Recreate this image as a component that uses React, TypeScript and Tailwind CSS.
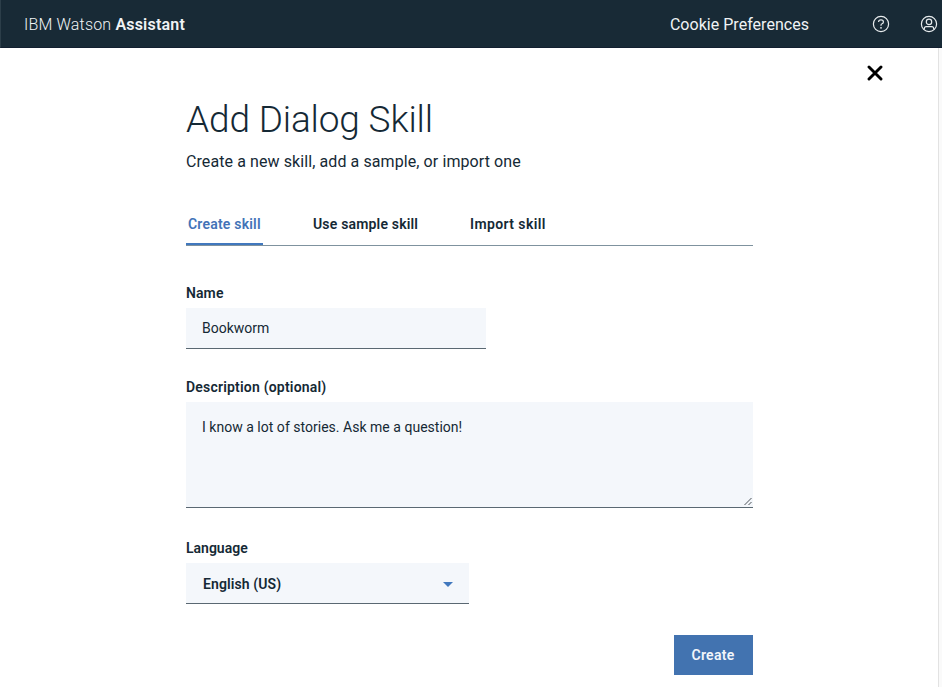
import React from "react";

function HelpIcon() {
  return (
    <svg width="18" height="18" viewBox="0 0 18 18" fill="none" stroke="#e8ecee" strokeWidth="1.2">
      <circle cx="9" cy="9" r="7.6" />
      <path d="M6.6 7.1V6.8C6.6 5.6 7.5 4.9 9 4.9s2.4.8 2.4 2c0 1-.6 1.5-1.4 1.9-.7.3-1 .6-1 1.4v.5" />
      <circle cx="9" cy="12.8" r=".9" fill="#e8ecee" stroke="none" />
    </svg>
  );
}

function UserIcon() {
  return (
    <svg width="18" height="18" viewBox="0 0 18 18" fill="none" stroke="#e8ecee" strokeWidth="1.2">
      <circle cx="9" cy="9" r="7.6" />
      <circle cx="9" cy="6.9" r="2.7" />
      <path d="M4.3 14.6v-.9c0-1.2.9-2 2-2h5.4c1.1 0 2 .8 2 2v.9" />
    </svg>
  );
}

const label = "block h-5 w-fit whitespace-nowrap text-[14px] leading-5 font-semibold";

export default function App() {
  return (
    <div className="flex h-[687px] w-[942px] flex-col overflow-hidden bg-white font-['Roboto','Liberation_Sans',sans-serif] text-[#152935]">
      <header className="flex h-12 shrink-0 items-center border-b border-l border-b-[#121f30] border-l-[#2c3e49] bg-[#182a36] pl-[23px] text-[16px] text-[#f0f3f5]">
        <div className="pt-[2px] whitespace-nowrap">
          <span className="font-light tracking-[0.18px]">IBM Watson </span>
          <span className="font-semibold tracking-[0.2px]">Assistant</span>
        </div>
        <div className="mr-[63px] ml-auto pt-[2px] whitespace-nowrap tracking-[0.03px]">Cookie Preferences</div>
        <div className="flex gap-[30px] pr-1">
          <HelpIcon />
          <UserIcon />
        </div>
      </header>
      <div className="flex flex-1">
        <main className="relative w-[939px] border-r border-[#e2e2e2] pl-[186px]">
          <button aria-label="Close" className="absolute top-[17px] left-[867px]">
            <svg width="16" height="16" viewBox="0 0 16 16" stroke="#000" strokeWidth="2.9" strokeLinecap="round">
              <path d="M2 2 14 14M14 2 2 14" />
            </svg>
          </button>
          <div className="flex w-[567px] flex-col">
            <h1 className="mt-[48px] h-12 w-fit whitespace-nowrap text-[37px] leading-[48px] font-light tracking-[-0.15px]">Add Dialog Skill</h1>
            <p className="mt-[6px] h-6 w-fit whitespace-nowrap text-[16px] leading-6 tracking-[0.09px]">Create a new skill, add a sample, or import one</p>
            <nav className="mt-[29px] flex h-[43px] border-b border-[#7f929e] text-[14px] leading-5 font-semibold">
              <div className="h-[42px] w-[77px] border-b-2 border-[#4178be] pt-[11px] pl-[2px] tracking-[0.2px] whitespace-nowrap text-[#4373b7]"><span>Create skill</span></div>
              <div className="ml-[50px] w-[107px] pt-[11px] tracking-[0.18px] whitespace-nowrap"><span>Use sample skill</span></div>
              <div className="ml-[50px] pt-[11px] tracking-[0.4px] whitespace-nowrap"><span>Import skill</span></div>
            </nav>
            <label className={label + " mt-[37px] tracking-[0.1px]"}>Name</label>
            <div className="mt-[5px] flex h-[41px] w-[300px] items-center border-b border-[#5a6872] bg-[#f4f7fb] pl-4 text-[14px]"><span>Bookworm</span></div>
            <label className={label + " mt-7 tracking-[0.2px]"}>Description (optional)</label>
            <div className="mt-[5px] flex h-[106px] justify-between border-b border-[#5a6872] bg-[#f4f7fb] pl-4 text-[14px] leading-5 tracking-[0.02px]">
              <span className="pt-[15px]">I know a lot of stories. Ask me a question!</span>
              <svg className="self-end" width="9" height="10" viewBox="0 0 9 10" stroke="#4c5358" strokeWidth="1">
                <path d="M.5 8 7.5 1M4.5 8 7.5 5" />
              </svg>
            </div>
            <label className={label + " mt-[30px]"}>Language</label>
            <div className="mt-[5px] flex h-[41px] w-[283px] items-center justify-between border-b border-[#5a6872] bg-[#f4f7fb] pt-[2px] pr-4 pl-[17px] text-[14px] font-semibold tracking-[0.1px]">
              <span>English (US)</span>
              <svg width="10" height="5" viewBox="0 0 10 5" fill="#4178be"><path d="M0 0h10L5 5z" /></svg>
            </div>
            <button className="mt-[31px] h-10 w-[79px] self-end bg-[#4273b0] pr-px text-[14px] font-semibold tracking-[0.3px] text-[#f2f6fa]">Create</button>
          </div>
        </main>
        <div className="flex-1 bg-[#fafafa]" />
      </div>
    </div>
  );
}
